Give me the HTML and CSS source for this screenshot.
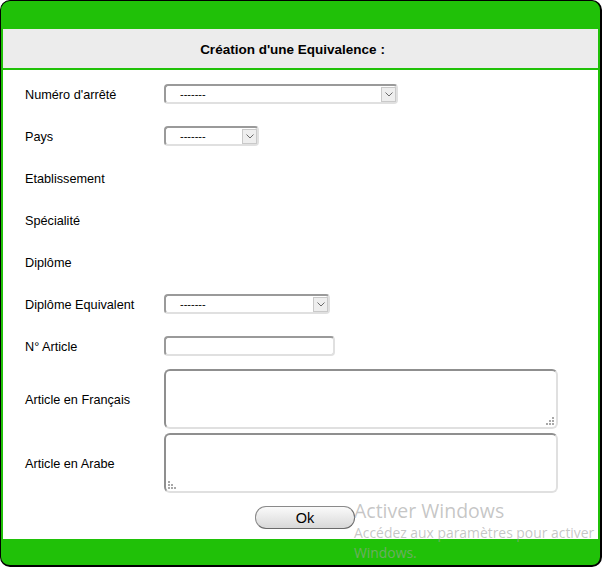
FILE: index.html
```html
<!DOCTYPE html>
<html lang="fr">
<head>
<meta charset="utf-8">
<title>Création d'une Equivalence</title>
<link rel="stylesheet" href="styles.css">
</head>
<body>
<div class="frame">
  <div class="head">Création d'une Equivalence :</div>
  <div class="content">
    <div class="row">
      <div class="lbl">Numéro d'arrêté</div>
      <div class="sel w-arrete"><span class="opt">-------</span><span class="arrow"><svg width="8" height="5" viewBox="0 0 8 5"><path d="M0.5 0.5 L4 4 L7.5 0.5" fill="none" stroke="#6a6a6a" stroke-width="1"/></svg></span></div>
    </div>
    <div class="row">
      <div class="lbl">Pays</div>
      <div class="sel w-pays"><span class="opt">-------</span><span class="arrow"><svg width="8" height="5" viewBox="0 0 8 5"><path d="M0.5 0.5 L4 4 L7.5 0.5" fill="none" stroke="#6a6a6a" stroke-width="1"/></svg></span></div>
    </div>
    <div class="row"><div class="lbl">Etablissement</div></div>
    <div class="row"><div class="lbl">Spécialité</div></div>
    <div class="row"><div class="lbl">Diplôme</div></div>
    <div class="row">
      <div class="lbl">Diplôme Equivalent</div>
      <div class="sel w-equiv"><span class="opt">-------</span><span class="arrow"><svg width="8" height="5" viewBox="0 0 8 5"><path d="M0.5 0.5 L4 4 L7.5 0.5" fill="none" stroke="#6a6a6a" stroke-width="1"/></svg></span></div>
    </div>
    <div class="row">
      <div class="lbl">N° Article</div>
      <input class="txt" type="text">
    </div>
    <div class="row tall">
      <div class="lbl">Article en Français</div>
      <div class="area-wrap">
        <textarea class="area"></textarea>
        <svg class="grip grip-r" width="8" height="8" viewBox="0 0 8 8"><g fill="#a8a8a8"><rect x="6" y="0" width="2" height="2"/><rect x="3" y="3" width="2" height="2"/><rect x="6" y="3" width="2" height="2"/><rect x="0" y="6" width="2" height="2"/><rect x="3" y="6" width="2" height="2"/><rect x="6" y="6" width="2" height="2"/></g></svg>
      </div>
    </div>
    <div class="row tall">
      <div class="lbl">Article en Arabe</div>
      <div class="area-wrap">
        <textarea class="area" dir="rtl"></textarea>
        <svg class="grip grip-l" width="8" height="8" viewBox="0 0 8 8"><g fill="#a8a8a8"><rect x="0" y="0" width="2" height="2"/><rect x="0" y="3" width="2" height="2"/><rect x="3" y="3" width="2" height="2"/><rect x="0" y="6" width="2" height="2"/><rect x="3" y="6" width="2" height="2"/><rect x="6" y="6" width="2" height="2"/></g></svg>
      </div>
    </div>
    <div class="row btn-row">
      <button class="ok" type="button">Ok</button>
    </div>
  </div>
</div>
<div class="watermark">
  <div class="wm-title">Activer Windows</div>
  <div class="wm-sub">Accédez aux paramètres pour activer<br>Windows.</div>
</div>
</body>
</html>
```
FILE: styles.css
```css
html, body {
  margin: 0;
  padding: 0;
  background: #fff;
}
body {
  font-family: "Liberation Sans", Arial, sans-serif;
  color: #000;
  position: relative;
  width: 603px;
  height: 568px;
}
.frame {
  width: 602px;
  height: 567px;
  box-sizing: border-box;
  border: 1px solid #000;
  border-right-width: 2px;
  border-bottom-width: 2px;
  border-radius: 10px;
  background: #20c108;
  padding: 28px 2px 0 2px;
  overflow: hidden;
}
.head {
  height: 39px;
  background: #ececec;
  display: flex;
  align-items: center;
  justify-content: center;
  padding-right: 16px;
  padding-top: 1px;
  box-sizing: border-box;
  font-weight: bold;
  font-size: 13.5px;
  margin-bottom: 2px;
}
.content {
  background: #fff;
  height: 469px;
  box-sizing: border-box;
  padding: 3px 0 0 22px;
  display: flex;
  flex-direction: column;
}
.row {
  display: flex;
  align-items: center;
  height: 42px;
  flex: none;
}
.row.tall {
  height: 64px;
}
.lbl {
  width: 139px;
  flex: none;
  font-size: 12.7px;
  padding-top: 2px;
}
.sel {
  height: 20px;
  box-sizing: border-box;
  border: 2px solid;
  border-color: #9a9a9a #e0e0e0 #e0e0e0 #9a9a9a;
  border-radius: 4px;
  display: flex;
  align-items: center;
  justify-content: space-between;
  background: #fff;
}
.w-arrete { width: 234px; }
.w-pays { width: 95px; }
.w-equiv { width: 166px; }
.opt {
  font-size: 11px;
  padding-left: 14px;
}
.arrow {
  width: 15px;
  height: 15px;
  box-sizing: border-box;
  border: 1px solid #c9c9c9;
  background: #eeeeee;
  display: flex;
  align-items: center;
  justify-content: center;
}
.txt {
  width: 171px;
  height: 20px;
  box-sizing: border-box;
  margin: 0;
  padding: 0 4px;
  border: 2px solid;
  border-color: #9a9a9a #e0e0e0 #e0e0e0 #9a9a9a;
  border-radius: 4px;
  outline: none;
}
.area-wrap {
  position: relative;
  width: 394px;
  height: 60px;
}
.area {
  display: block;
  width: 394px;
  height: 60px;
  box-sizing: border-box;
  margin: 0;
  padding: 2px;
  border: 2px solid;
  border-color: #8f8f8f #e0e0e0 #e0e0e0 #8f8f8f;
  border-radius: 6px;
  resize: none;
  outline: none;
}
.grip {
  position: absolute;
  bottom: 4px;
}
.grip-r { right: 4px; }
.grip-l { left: 4px; }
.btn-row {
  height: 44px;
  padding-left: 230px;
}
.ok {
  width: 100px;
  height: 23px;
  box-sizing: border-box;
  border: 1px solid #8a8a8a;
  border-bottom-color: #6a6a6a;
  border-right-color: #6a6a6a;
  border-radius: 11px;
  background: linear-gradient(#fafafa, #e6e6e6 60%, #d8d8d8);
  font-family: "Liberation Sans", Arial, sans-serif;
  font-size: 14.5px;
  color: #000;
  padding: 2px 0 0;
  margin: 0;
}
.watermark {
  position: absolute;
  left: 354px;
  top: 499px;
  color: rgba(160, 160, 160, 0.6);
  font-family: "Open Sans", "Noto Sans", sans-serif;
  pointer-events: none;
}
.wm-title {
  font-size: 19.5px;
  line-height: 24px;
}
.wm-sub {
  font-size: 13.9px;
  line-height: 20px;
  white-space: nowrap;
}
```
